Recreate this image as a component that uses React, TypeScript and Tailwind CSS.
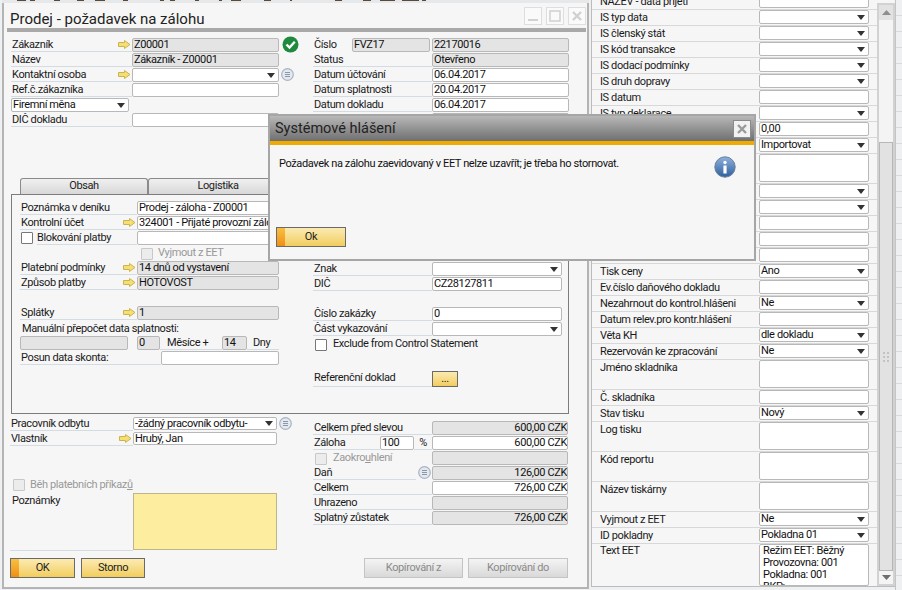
import React from "react";

const font = "font-['Roboto','Noto_Sans',sans-serif] tracking-[-0.38px]";

function Arrow() {
  return (
    <svg width="13" height="9" viewBox="0 0 13 9" className="shrink-0">
      <path d="M0.5 2.5H6.5V0.5L12 4.5L6.5 8.5V6.5H0.5Z" fill="#f6de72" stroke="#c9b450" strokeWidth="1" />
    </svg>
  );
}

function Caret() {
  return (
    <svg width="8" height="5" viewBox="0 0 8 5" className="shrink-0">
      <path d="M0 0H8L4 5Z" fill="#333" />
    </svg>
  );
}

function MenuIcon() {
  return (
    <svg width="13" height="13" viewBox="0 0 13 13" className="shrink-0">
      <circle cx="6.5" cy="6.5" r="5.8" fill="#e4e9f0" stroke="#a9b4c4" strokeWidth="1.2" />
      <path d="M4 4.5H9M4 6.5H9M4 8.5H9" stroke="#8c97a8" strokeWidth="1" />
    </svg>
  );
}

type FieldProps = {
  value?: string;
  kind?: "white" | "gray" | "select";
  w?: string;
  h?: string;
  right?: boolean;
};

function Field({ value = "", kind = "white", w = "w-[147px]", h = "h-[14px]", right = false }: FieldProps) {
  const bg = kind === "gray" ? "bg-[#e4e4e4]" : "bg-white";
  return (
    <div
      className={`${w} ${h} ${bg} shrink-0 flex items-center ${right ? "justify-end pr-0" : "justify-between pr-[3px]"} border border-[#b8b8b8] rounded-[2px] pl-px text-[11px] leading-[12px] text-[#111] overflow-hidden whitespace-nowrap`}
    >
      <span>{value}</span>
      {kind === "select" && <Caret />}
    </div>
  );
}

type RowProps = {
  label?: string;
  arrow?: boolean;
  lw: string;
  children?: React.ReactNode;
};

function Row({ label = "", arrow = false, lw, children }: RowProps) {
  return (
    <div className="flex h-[15px] items-start">
      <div
        className={`${lw} shrink-0 h-[14px] flex items-center justify-between border-b border-[#d3dce3] pl-px text-[11px] leading-[13px] text-[#1a1a1a] whitespace-nowrap overflow-hidden`}
      >
        <span>{label}</span>
        {arrow && <span className="pr-px"><Arrow /></span>}
      </div>
      {children}
    </div>
  );
}

function Check({ disabled = false }: { disabled?: boolean }) {
  return (
    <div className={`w-[12px] h-[12px] shrink-0 border rounded-[1px] ${disabled ? "bg-[#ececec] border-[#c8c8c8]" : "bg-white border-[#777]"}`} />
  );
}

function YellowBtn({ label, w, active = false, h = "h-[20px]" }: { label: string; w: string; active?: boolean; h?: string }) {
  return (
    <div className={`${w} ${h} relative shrink-0 flex items-center justify-center border border-[#6a6a6a] bg-gradient-to-b from-[#fbeab0] to-[#f2cd5c] text-[11px] text-[#222]`}>
      {active && <div className="absolute left-0 top-0 bottom-0 w-[8px] bg-gradient-to-b from-[#f8c040] to-[#ee8f10]" />}
      <span className="relative">{label}</span>
    </div>
  );
}

function GrayBtn({ label, w }: { label: string; w: string }) {
  return (
    <div className={`${w} h-[20px] shrink-0 flex items-center justify-center border border-[#c4c4c4] bg-gradient-to-b from-[#f4f4f4] to-[#d9d9d9] text-[11px] text-[#8a8a8a]`}>
      {label}
    </div>
  );
}

type Side = { l: string; v?: string; k?: "white" | "select"; tall?: boolean };

const sideRows: Side[] = [
  { l: "NÁZEV - data přijetí" },
  { l: "IS typ data", k: "select" },
  { l: "IS členský stát", k: "select" },
  { l: "IS kód transakce", k: "select" },
  { l: "IS dodací podmínky", k: "select" },
  { l: "IS druh dopravy", k: "select" },
  { l: "IS datum" },
  { l: "IS typ deklarace", k: "select" },
  { l: "", v: "0,00" },
  { l: "", v: "Importovat", k: "select" },
  { l: "", tall: true },
  { l: "", k: "select" },
  { l: "", k: "select" },
  { l: "" },
  { l: "" },
  { l: "" },
  { l: "Tisk ceny", v: "Ano", k: "select" },
  { l: "Ev.číslo daňového dokladu" },
  { l: "Nezahrnout do kontrol.hlášeni", v: "Ne", k: "select" },
  { l: "Datum relev.pro kontr.hlášení" },
  { l: "Věta KH", v: "dle dokladu", k: "select" },
  { l: "Rezervován ke zpracování", v: "Ne", k: "select" },
  { l: "Jméno skladníka", tall: true },
  { l: "Č. skladníka" },
  { l: "Stav tisku", v: "Nový", k: "select" },
  { l: "Log tisku", tall: true },
  { l: "Kód reportu", tall: true },
  { l: "Název tiskárny", tall: true },
  { l: "Vyjmout z EET", v: "Ne", k: "select" },
  { l: "ID pokladny", v: "Pokladna 01", k: "select" },
];

function SideRow({ l, v, k = "white", tall }: Side) {
  return (
    <div className={`flex ${tall ? "h-[30px]" : "h-[16px]"} border-b border-[#d8d8d8]`}>
      <div className="w-[167px] shrink-0 pl-[8px] text-[11px] leading-[14px] pt-px text-[#1a1a1a] whitespace-nowrap overflow-hidden">{l}</div>
      <Field value={v} kind={k} w="w-[110px]" h={tall ? "h-[28px]" : "h-[14px]"} />
    </div>
  );
}

function Scrollbar() {
  return (
    <div className="w-[18px] h-[583px] shrink-0 mt-[3px] flex flex-col border-2 border-[#d2d2d2] bg-[#f4f4f4]">
      <div className="h-[15px] shrink-0 flex items-center justify-center bg-[#e2e2e2]">
        <svg width="9" height="5" viewBox="0 0 9 5"><path d="M0 5H9L4.5 0Z" fill="#8e8e8e" /></svg>
      </div>
      <div className="h-[122px] shrink-0" />
      <div className="flex-1 bg-[#e2e2e2] border border-[#b6b6b6] flex items-center justify-center">
        <div className="grid grid-cols-2 gap-[2px] opacity-60">
          {[0, 1, 2, 3, 4, 5].map((i) => (
            <div key={i} className="w-[2px] h-[2px] bg-[#b0b0b0]" />
          ))}
        </div>
      </div>
      <div className="h-[13px] shrink-0 flex items-center justify-center">
        <svg width="9" height="5" viewBox="0 0 9 5"><path d="M0 0H9L4.5 5Z" fill="#6e6e6e" /></svg>
      </div>
    </div>
  );
}

function Tab({ label, w }: { label: string; w: string }) {
  return (
    <div className={`${w} h-[16px] shrink-0 flex items-center justify-center border border-b-0 border-[#8a8a8a] rounded-t-[3px] bg-gradient-to-b from-[#f0f0f0] to-[#d8d8d8] text-[11px] text-[#222]`}>
      {label}
    </div>
  );
}

function Win({ sym }: { sym: "min" | "max" | "x" }) {
  return (
    <div className="w-[18px] h-[18px] flex items-center justify-center border border-[#dedede] bg-[#fafafa]">
      <svg width="12" height="12" viewBox="0 0 12 12">
        {sym === "min" && <rect x="1" y="9" width="10" height="2" fill="#d2d2d2" />}
        {sym === "max" && <rect x="1" y="1" width="10" height="10" fill="none" stroke="#d0d0d0" strokeWidth="1.5" />}
        {sym === "x" && <path d="M2 2L10 10M10 2L2 10" stroke="#d0d0d0" strokeWidth="2.4" />}
      </svg>
    </div>
  );
}

const topMarks: [number, number][] = [
  [15, 9], [28, 5], [52, 6], [75, 7], [93, 10], [121, 5], [158, 4], [168, 5], [193, 4], [217, 3], [229, 10], [262, 7],
  [288, 2], [333, 7], [361, 8], [378, 15], [400, 17], [420, 4],
];

export default function App() {
  return (
    <div className={`relative w-[902px] h-[590px] overflow-hidden bg-[#eef0f2] flex items-start ${font}`}>
      {/* left column: strip of the window behind, then the main window */}
      <div className="w-[591px] h-[590px] shrink-0 flex flex-col pl-[2px] pr-[2px]">
        <div className="h-[3px] shrink-0 relative overflow-hidden bg-[#e6e8ea]">
          {topMarks.map(([x, w], i) => (
            <div key={i} className="absolute top-0 h-[1px] bg-[#5a4a3a]" style={{ left: x, width: w }} />
          ))}
        </div>
        <div className="w-[587px] h-[586px] shrink-0 flex flex-col border-x-2 border-b-2 border-[#b4b4b4] bg-[#f6f6f6]">
          <div className="h-[25px] shrink-0 flex items-start justify-between pl-[6px] pr-[1px] pt-[4px]">
            <div className="text-[15px] leading-[24px] tracking-normal text-[#222]">Prodej - požadavek na zálohu</div>
            <div className="flex gap-[4px]">
              <Win sym="min" />
              <Win sym="max" />
              <Win sym="x" />
            </div>
          </div>
          <div className="h-[4px] shrink-0 ml-[3px] mr-[1px] bg-[#a9a9a9]" />

          {/* header */}
          <div className="h-[146px] shrink-0 flex pt-[6px] pl-[7px]">
            <div className="w-[302px] shrink-0 flex flex-col">
              <Row label="Zákazník" arrow lw="w-[121px]">
                <Field kind="gray" value="Z00001" />
                <svg width="17" height="17" viewBox="0 0 17 17" className="ml-[3px] -mt-[2px] shrink-0">
                  <circle cx="8.5" cy="8.5" r="8" fill="#1f8a3e" />
                  <path d="M4.5 8.5L7.5 11.5L12.8 5.8" fill="none" stroke="#fff" strokeWidth="2.4" />
                </svg>
              </Row>
              <Row label="Název" lw="w-[121px]">
                <Field kind="gray" value="Zákazník - Z00001" />
              </Row>
              <Row label="Kontaktní osoba" arrow lw="w-[121px]">
                <Field kind="select" />
                <span className="ml-[2px]"><MenuIcon /></span>
              </Row>
              <Row label="Ref.č.zákazníka" lw="w-[121px]">
                <Field />
              </Row>
              <div className="h-[15px]">
                <Field kind="select" value="Firemní měna" w="w-[118px]" />
              </div>
              <Row label="DIČ dokladu" lw="w-[121px]">
                <Field />
              </Row>
            </div>
            <div className="w-[256px] shrink-0 flex flex-col">
              <div className="flex h-[15px]">
                <div className="w-[39px] h-[14px] shrink-0 pl-px text-[11px] leading-[14px] text-[#1a1a1a]">Číslo</div>
                <Field kind="gray" value="FVZ17" w="w-[78px]" />
                <div className="w-[2px] shrink-0" />
                <Field kind="gray" value="22170016" w="w-[137px]" />
              </div>
              <Row label="Status" lw="w-[119px]"><Field kind="gray" value="Otevřeno" w="w-[137px]" /></Row>
              <Row label="Datum účtování" lw="w-[119px]"><Field value="06.04.2017" w="w-[137px]" /></Row>
              <Row label="Datum splatnosti" lw="w-[119px]"><Field value="20.04.2017" w="w-[137px]" /></Row>
              <Row label="Datum dokladu" lw="w-[119px]"><Field value="06.04.2017" w="w-[137px]" /></Row>
              <Row label="" lw="w-[119px]"><Field kind="gray" w="w-[137px]" /></Row>
            </div>
          </div>

          {/* tabs */}
          <div className="flex shrink-0 pl-[16px]">
            <Tab label="Obsah" w="w-[128px]" />
            <Tab label="Logistika" w="w-[140px]" />
          </div>

          {/* tab panel */}
          <div className="h-[220px] shrink-0 w-[558px] ml-[7px] border border-[#7c7c7c] flex pt-[6px] pl-[8px]">
            <div className="w-[293px] shrink-0 flex flex-col">
              <Row label="Poznámka v deníku" lw="w-[117px]"><Field value="Prodej - záloha - Z00001" w="w-[142px]" /></Row>
              <Row label="Kontrolní účet" arrow lw="w-[117px]"><Field value="324001 - Přijaté provozní zálohy" w="w-[142px]" /></Row>
              <div className="flex h-[15px]">
                <div className="w-[17px] shrink-0 pl-px pt-[1px]"><Check /></div>
                <div className="w-[100px] shrink-0 h-[14px] border-b border-[#d3dce3] text-[11px] leading-[14px] text-[#1a1a1a]">Blokování platby</div>
                <Field w="w-[142px]" />
              </div>
              <div className="flex h-[15px] items-center pl-[121px] gap-[5px] text-[11px] text-[#999]">
                <Check disabled />
                <span>Vyjmout z EET</span>
              </div>
              <Row label="Platební podmínky" arrow lw="w-[117px]"><Field kind="gray" value="14 dnů od vystavení" w="w-[142px]" /></Row>
              <Row label="Způsob platby" arrow lw="w-[117px]"><Field kind="gray" value="HOTOVOST" w="w-[142px]" /></Row>
              <div className="h-[15px]" />
              <Row label="Splátky" arrow lw="w-[117px]"><Field kind="gray" value="1" w="w-[142px]" /></Row>
              <div className="h-[15px] pl-[2px] text-[11px] leading-[15px] text-[#1a1a1a]">Manuální přepočet data splatnosti:</div>
              <div className="flex h-[15px] items-start">
                <Field kind="gray" w="w-[108px]" />
                <div className="w-[9px] shrink-0" />
                <Field kind="gray" value="0" w="w-[23px]" />
                <div className="w-[62px] shrink-0 pl-[7px] h-[14px] border-b border-[#d3dce3] text-[11px] leading-[14px] text-[#1a1a1a]">Měsíce +</div>
                <Field kind="gray" value="14" w="w-[25px]" />
                <div className="w-[32px] shrink-0 pl-[6px] h-[14px] border-b border-[#d3dce3] text-[11px] leading-[14px] text-[#1a1a1a]">Dny</div>
              </div>
              <Row label="Posun data skonta:" lw="w-[141px]"><Field w="w-[118px]" /></Row>
            </div>
            <div className="w-[249px] shrink-0 flex flex-col pt-[61px]">
              <Row label="Znak" lw="w-[119px]"><Field kind="select" w="w-[130px]" /></Row>
              <Row label="DIČ" lw="w-[119px]"><Field value="CZ28127811" w="w-[130px]" /></Row>
              <div className="h-[15px]" />
              <Row label="Číslo zakázky" lw="w-[119px]"><Field value="0" w="w-[130px]" /></Row>
              <Row label="Část vykazování" lw="w-[119px]"><Field kind="select" w="w-[130px]" /></Row>
              <div className="flex h-[15px] items-center pl-[2px] gap-[6px] text-[11px] text-[#1a1a1a]">
                <Check />
                <span>Exclude from Control Statement</span>
              </div>
              <div className="h-[19px]" />
              <div className="flex h-[16px]">
                <div className="w-[119px] shrink-0 h-[16px] border-b border-[#d3dce3] pl-px text-[11px] leading-[14px] text-[#1a1a1a]">Referenční doklad</div>
                <YellowBtn label="..." w="w-[26px]" h="h-[16px]" />
              </div>
            </div>
          </div>

          {/* bottom */}
          <div className="flex pl-[6px] shrink-0">
            <div className="w-[303px] shrink-0 flex flex-col pt-[3px]">
              <Row label="Pracovník odbytu" lw="w-[123px]">
                <Field kind="select" value="-žádný pracovník odbytu-" w="w-[144px]" h="h-[13px]" />
                <span className="ml-[2px]"><MenuIcon /></span>
              </Row>
              <Row label="Vlastník" arrow lw="w-[123px]"><Field value="Hrubý, Jan" w="w-[144px]" h="h-[13px]" /></Row>
              <div className="h-[30px]" />
              <div className="flex h-[16px] items-center pl-[3px] gap-[5px] text-[11px] text-[#999]">
                <Check disabled />
                <span>Běh platebních příkaz<u>ů</u></span>
              </div>
              <div className="flex h-[58px]">
                <div className="w-[123px] shrink-0 border-b border-[#d3dce3] pl-[2px] pt-[1px] text-[11px] leading-[14px] text-[#1a1a1a]">Poznámky</div>
                <div className="w-[144px] shrink-0 h-[57px] border border-[#bdb58c] bg-[#fdee9f]" />
              </div>
            </div>
            <div className="w-[256px] shrink-0 flex flex-col pt-[7px]">
              <Row label="Celkem před slevou" lw="w-[119px]"><Field kind="gray" value="600,00 CZK" w="w-[136px]" right /></Row>
              <div className="flex h-[15px]">
                <div className="w-[67px] h-[14px] shrink-0 border-b border-[#d3dce3] pl-px text-[11px] leading-[14px] text-[#1a1a1a]">Záloha</div>
                <Field value="100" w="w-[34px]" />
                <div className="w-[18px] shrink-0 h-[14px] border-b border-[#d3dce3] text-center text-[11px] leading-[14px] text-[#1a1a1a]">%</div>
                <Field value="600,00 CZK" w="w-[136px]" right />
              </div>
              <div className="flex h-[15px]">
                <div className="w-[119px] shrink-0 flex items-center pl-[2px] gap-[6px] text-[11px] text-[#999]">
                  <Check disabled />
                  <span>Zaokro<u>u</u>hlení</span>
                </div>
                <Field kind="gray" w="w-[136px]" />
              </div>
              <div className="flex h-[15px]">
                <div className="w-[103px] h-[14px] shrink-0 border-b border-[#d3dce3] pl-px text-[11px] leading-[14px] text-[#1a1a1a]">Daň</div>
                <div className="w-[16px] shrink-0 flex justify-center"><MenuIcon /></div>
                <Field kind="gray" value="126,00 CZK" w="w-[136px]" right />
              </div>
              <Row label="Celkem" lw="w-[119px]"><Field value="726,00 CZK" w="w-[136px]" right /></Row>
              <Row label="Uhrazeno" lw="w-[119px]"><Field kind="gray" w="w-[136px]" /></Row>
              <Row label="Splatný zůstatek" lw="w-[119px]"><Field kind="gray" value="726,00 CZK" w="w-[136px]" right /></Row>
            </div>
          </div>

          {/* buttons */}
          <div className="flex pl-[6px] pt-[7px] shrink-0">
            <YellowBtn label="OK" w="w-[65px]" active />
            <div className="w-[6px] shrink-0" />
            <YellowBtn label="Storno" w="w-[64px]" />
            <div className="w-[219px] shrink-0" />
            <GrayBtn label="Kopírování z" w="w-[99px]" />
            <div className="w-[5px] shrink-0" />
            <GrayBtn label="Kopírování do" w="w-[100px]" />
          </div>
        </div>
      </div>

      {/* side panel */}
      <div className="w-[304px] h-[587px] shrink-0 flex border-l border-b border-[#bcbcbc] bg-[#f6f6f6] overflow-hidden">
        <div className="w-[285px] shrink-0 h-full overflow-hidden flex flex-col">
          <div className="-mt-[6px] flex flex-col">
            {sideRows.map((r, i) => (
              <SideRow key={i} {...r} />
            ))}
            <div className="flex h-[42px]">
              <div className="w-[167px] shrink-0 pl-[8px] text-[11px] leading-[14px] text-[#1a1a1a]">Text EET</div>
              <div className="w-[110px] h-[42px] shrink-0 border border-[#b8b8b8] rounded-[2px] bg-white pl-[3px] text-[11px] leading-[12px] text-[#111] overflow-hidden">
                <div>Režim EET: Běžný</div>
                <div>Provozovna: 001</div>
                <div>Pokladna: 001</div>
                <div>BKP:</div>
              </div>
            </div>
          </div>
        </div>
        <Scrollbar />
      </div>

      {/* strip of the window behind, right edge */}
      <div className="flex-1 h-[590px] flex flex-col bg-[#eef0f2] border-l border-[#c4c4c4]">
        {Array.from({ length: 36 }).map((_, i) => (
          <div key={i} className="h-[16px] shrink-0 border-b border-[#d8dadc]" />
        ))}
      </div>

      {/* message dialog */}
      <div className="absolute left-[268px] top-[114px] w-[488px] h-[147px] border-2 border-[#a6a6a6] bg-[#f6f6f6] flex flex-col">
        <div className="h-[25px] shrink-0 bg-gradient-to-b from-[#b8b8b8] to-[#707070] flex items-center justify-between pl-[5px] pr-[3px]">
          <div className="text-[14.5px] leading-[20px] tracking-normal text-[#222]">Systémové hlášení</div>
          <div className="w-[18px] h-[18px] flex items-center justify-center border border-[#8a8a8a] bg-[#f2f2f2]">
            <svg width="12" height="12" viewBox="0 0 12 12">
              <path d="M2 2L10 10M10 2L2 10" stroke="#9a9a9a" strokeWidth="2.4" />
            </svg>
          </div>
        </div>
        <div className="h-[4px] shrink-0 bg-[#f0ab00]" />
        <div className="flex-1 flex items-start justify-between pl-[9px] pr-[18px] pt-[12px]">
          <div className="text-[11px] leading-[14px] text-[#111]">Požadavek na zálohu zaevidovaný v EET nelze uzavřít; je třeba ho stornovat.</div>
          <svg width="22" height="22" viewBox="0 0 22 22" className="shrink-0 -mt-px">
            <defs>
              <linearGradient id="info" x1="0" y1="0" x2="0" y2="1">
                <stop offset="0" stopColor="#8fb1dc" />
                <stop offset="1" stopColor="#2f5f9e" />
              </linearGradient>
            </defs>
            <circle cx="11" cy="11" r="10.2" fill="url(#info)" stroke="#6b7f99" strokeWidth="1" />
            <circle cx="11" cy="6.5" r="1.7" fill="#fff" />
            <rect x="9.4" y="9.5" width="3.2" height="8" fill="#fff" />
          </svg>
        </div>
        <div className="pl-[6px] pb-[12px]">
          <YellowBtn label="Ok" w="w-[70px]" active />
        </div>
      </div>
    </div>
  );
}
